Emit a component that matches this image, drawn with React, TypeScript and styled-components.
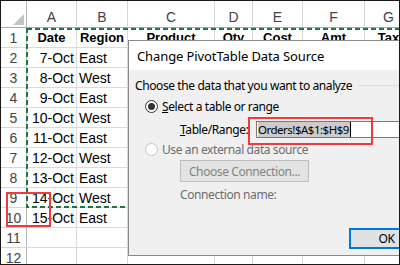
import React, { FC } from 'react';
import styled, { createGlobalStyle } from 'styled-components';

const GlobalStyle = createGlobalStyle`
  html, body {
    margin: 0;
    padding: 0;
    background: #ffffff;
    overflow: hidden;
  }
`;

const Frame = styled.div`
  position: relative;
  width: 400px;
  height: 265px;
  box-sizing: border-box;
  border: 1px solid #1a1a1a;
  overflow: hidden;
  background: #ffffff;
  font-family: 'Liberation Sans', Arial, sans-serif;
`;

const Sheet = styled.div`
  display: grid;
  width: max-content;
  grid-template-columns: 26px 50px 51px 87px 38px 50px 62px 48px;
  grid-template-rows: 27px repeat(12, 20px);
`;

const Corner = styled.div`
  display: flex;
  align-items: flex-end;
  justify-content: flex-end;
  padding: 0 2px 2px 0;
  box-sizing: border-box;
  border-right: 1px solid #b8b8b8;
  border-bottom: 1px solid #a8a8a8;
`;

const CornerMark = styled.div`
  width: 11px;
  height: 11px;
  background: #c4c4c4;
  clip-path: polygon(100% 0, 100% 100%, 0 100%);
`;

const ColHead = styled.div`
  display: flex;
  align-items: flex-end;
  justify-content: center;
  padding-bottom: 2px;
  box-sizing: border-box;
  border-right: 1px solid #d6d6d6;
  border-bottom: 1px solid #a8a8a8;
  color: #444444;
  font-size: 14px;
`;

const RowHead = styled.div`
  display: flex;
  align-items: center;
  justify-content: center;
  box-sizing: border-box;
  border-right: 1px solid #b8b8b8;
  border-bottom: 1px solid #d6d6d6;
  color: #444444;
  font-size: 14px;
`;

const Cell = styled.div<{ $align?: 'left' | 'right' | 'center'; $bold?: boolean }>`
  display: flex;
  align-items: center;
  justify-content: ${(p) =>
    p.$align === 'right' ? 'flex-end' : p.$align === 'center' ? 'center' : 'flex-start'};
  padding: 0 2px;
  box-sizing: border-box;
  border-right: 1px solid #dadada;
  border-bottom: 1px solid #dadada;
  color: #000000;
  font-size: ${(p) => (p.$bold ? 13 : 14)}px;
  font-weight: ${(p) => (p.$bold ? 700 : 400)};
  white-space: nowrap;
  overflow: hidden;
`;

const Marquee = styled.svg`
  position: absolute;
  left: 25px;
  top: 27px;
  width: 400px;
  height: 190px;
  pointer-events: none;
`;

const Callout = styled.div<{ $x: number; $y: number; $w: number; $h: number }>`
  position: absolute;
  left: ${(p) => p.$x}px;
  top: ${(p) => p.$y}px;
  width: ${(p) => p.$w}px;
  height: ${(p) => p.$h}px;
  box-sizing: border-box;
  border: 2px solid #ee3b3f;
  pointer-events: none;
`;

const Dialog = styled.div`
  position: absolute;
  left: 127px;
  top: 39px;
  width: 320px;
  height: 216px;
  box-sizing: border-box;
  border: 1px solid #8a8a8a;
  background: #f0f0f0;
  display: flex;
  flex-direction: column;
  font-family: 'Noto Sans', 'Open Sans', sans-serif;
  font-size: 12px;
  letter-spacing: -0.4px;
  color: #000000;
`;

const TitleBar = styled.div`
  height: 29px;
  display: flex;
  align-items: center;
  padding-left: 8px;
  background: #ffffff;
  font-size: 13px;
  letter-spacing: -0.1px;
`;

const Body = styled.div`
  display: flex;
  flex-direction: column;
`;

const GroupHeader = styled.div`
  margin-top: 7px;
  height: 16px;
  display: flex;
  align-items: center;
  padding-left: 6px;
`;

const GroupLine = styled.div`
  flex: 1;
  height: 1px;
  margin-left: 6px;
  background: #dcdcdc;
`;

const OptionRow = styled.div<{ $mt: number; $disabled?: boolean }>`
  margin-top: ${(p) => p.$mt}px;
  height: 16px;
  display: flex;
  align-items: center;
  gap: 4px;
  padding-left: 16px;
  color: ${(p) => (p.$disabled ? '#6d6d6d' : '#000000')};
`;

const Radio = styled.span<{ $checked?: boolean; $disabled?: boolean }>`
  width: 13px;
  height: 13px;
  box-sizing: border-box;
  border-radius: 50%;
  border: 1px solid ${(p) => (p.$disabled ? '#c6c6c6' : '#333333')};
  background: #ffffff;
  display: flex;
  align-items: center;
  justify-content: center;

  &::after {
    content: '';
    display: ${(p) => (p.$checked ? 'block' : 'none')};
    width: 7px;
    height: 7px;
    border-radius: 50%;
    background: #333333;
  }
`;

const RangeRow = styled.div`
  margin-top: 6px;
  height: 18px;
  display: flex;
  align-items: center;
  padding-left: 51px;
`;

const RangeLabel = styled.span`
  width: 76px;
`;

const RangeInput = styled.div`
  flex: 1;
  height: 17px;
  box-sizing: border-box;
  border: 1px solid #7a7a7a;
  background: #ffffff;
  display: flex;
  align-items: center;
  padding-left: 1px;
  font-size: 11.5px;
  letter-spacing: -0.5px;
`;

const Selected = styled.span`
  background: #cccccc;
  color: #000000;
  padding-right: 1px;
  border-right: 1px solid #000000;
`;

const IndentText = styled.div<{ $mt: number }>`
  margin-top: ${(p) => p.$mt}px;
  height: 16px;
  display: flex;
  align-items: center;
  padding-left: 51px;
  color: #6d6d6d;
`;

const Button = styled.div<{ $mt: number; $ml: number; $w: number; $h: number; $default?: boolean }>`
  margin-top: ${(p) => p.$mt}px;
  margin-left: ${(p) => p.$ml}px;
  width: ${(p) => p.$w}px;
  height: ${(p) => p.$h}px;
  box-sizing: border-box;
  display: flex;
  align-items: center;
  justify-content: center;
  background: ${(p) => (p.$default ? '#e1e1e1' : '#e3e3e3')};
  border: ${(p) => (p.$default ? '2px solid #0078d7' : '1px solid #bdbdbd')};
  color: ${(p) => (p.$default ? '#000000' : '#838383')};
`;

const dates = ['7-Oct', '8-Oct', '9-Oct', '10-Oct', '11-Oct', '12-Oct', '13-Oct', '14-Oct', '15-Oct'];
const headers = ['Date', 'Region', 'Product', 'Qty', 'Cost', 'Amt', 'Tax'];
const letters = ['A', 'B', 'C', 'D', 'E', 'F', 'G'];

const App: FC = () => {
  const rows = Array.from({ length: 12 }, (_, i) => i + 1);

  return (
    <>
      <GlobalStyle />
      <Frame>
        <Sheet>
          <Corner>
            <CornerMark />
          </Corner>
          {letters.map((l) => (
            <ColHead key={l}>{l}</ColHead>
          ))}
          {rows.map((r) => {
            const cells: React.ReactNode[] = [];
            if (r === 1) {
              headers.forEach((h) =>
                cells.push(
                  <Cell key={h} $bold $align="center">
                    {h}
                  </Cell>,
                ),
              );
            } else if (r <= 10) {
              cells.push(
                <Cell key="a" $align="right">
                  {dates[r - 2]}
                </Cell>,
              );
              cells.push(<Cell key="b">{r % 2 === 0 ? 'East' : 'West'}</Cell>);
              for (let i = 0; i < 5; i++) cells.push(<Cell key={i} />);
            } else {
              for (let i = 0; i < 7; i++) cells.push(<Cell key={i} />);
            }
            return (
              <React.Fragment key={r}>
                <RowHead>{r}</RowHead>
                {cells}
              </React.Fragment>
            );
          })}
        </Sheet>

        <Marquee>
          <rect
            x={1}
            y={1}
            width={500}
            height={178}
            fill="none"
            stroke="#217346"
            strokeWidth={2}
            strokeDasharray="5 3"
          />
        </Marquee>

        <Callout $x={5} $y={191} $w={45} $h={35} />

        <Dialog>
          <TitleBar>Change PivotTable Data Source</TitleBar>
          <Body>
            <GroupHeader>
              Choose the data that you want to analyze
              <GroupLine />
            </GroupHeader>
            <OptionRow $mt={5}>
              <Radio $checked />
              <span>
                <u>S</u>elect a table or range
              </span>
            </OptionRow>
            <RangeRow>
              <RangeLabel>
                <u>T</u>able/Range:
              </RangeLabel>
              <RangeInput>
                <Selected>Orders!$A$1:$H$9</Selected>
              </RangeInput>
            </RangeRow>
            <OptionRow $mt={3} $disabled>
              <Radio $disabled />
              <span>Use an external data source</span>
            </OptionRow>
            <Button $mt={3} $ml={51} $w={129} $h={22}>
              Choose Connection...
            </Button>
            <IndentText $mt={4}>Connection name:</IndentText>
            <Button $mt={26} $ml={220} $w={75} $h={21} $default>
              OK
            </Button>
          </Body>
        </Dialog>

        <Callout $x={247} $y={116} $w={125} $h={28} />
      </Frame>
    </>
  );
};

export default App;
